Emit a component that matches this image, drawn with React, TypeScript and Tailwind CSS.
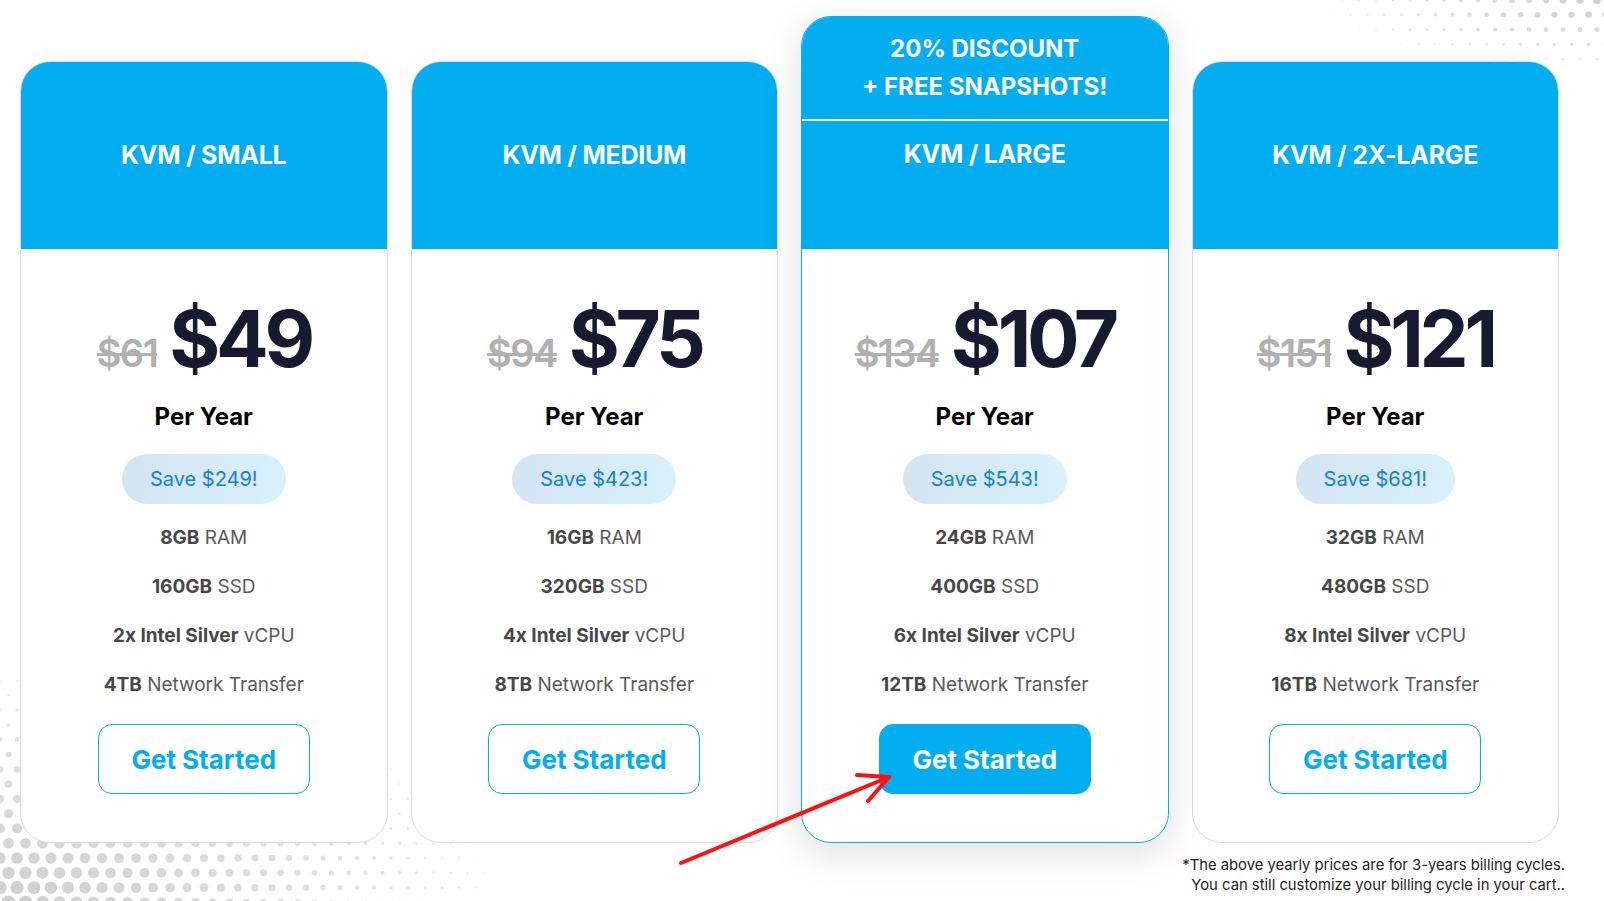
import React from 'react';
import clsx from 'clsx';

type Plan = {
  name: string;
  old: string;
  price: string;
  save: string;
  ram: string;
  ssd: string;
  cpu: string;
  transfer: string;
  featured?: boolean;
};

const plans: Plan[] = [
  { name: 'KVM / SMALL', old: '$61', price: '$49', save: 'Save $249!', ram: '8GB', ssd: '160GB', cpu: '2x', transfer: '4TB' },
  { name: 'KVM / MEDIUM', old: '$94', price: '$75', save: 'Save $423!', ram: '16GB', ssd: '320GB', cpu: '4x', transfer: '8TB' },
  { name: 'KVM / LARGE', old: '$134', price: '$107', save: 'Save $543!', ram: '24GB', ssd: '400GB', cpu: '6x', transfer: '12TB', featured: true },
  { name: 'KVM / 2X-LARGE', old: '$151', price: '$121', save: 'Save $681!', ram: '32GB', ssd: '480GB', cpu: '8x', transfer: '16TB' },
];

// halftone dot field, bigger dots near the given corner
const Halftone: React.FC<{ w: number; h: number; cornerX: number; cornerY: number; maxR: number; className: string }> = ({
  w,
  h,
  cornerX,
  cornerY,
  maxR,
  className,
}) => {
  const dots: React.ReactNode[] = [];
  const step = 17;
  for (let row = 0; row * step * 0.87 <= h + step; row++) {
    const y = row * step * 0.87;
    const offset = row % 2 ? step / 2 : 0;
    for (let x = offset; x <= w + step; x += step) {
      const dx = (x - cornerX) / w;
      const dy = (y - cornerY) / h;
      const d = Math.sqrt(dx * dx + dy * dy);
      const r = maxR * (1 - d);
      if (r < 0.6) continue;
      dots.push(<circle key={`${row}-${x}`} cx={x} cy={y} r={r} fill="#cfcfcf" opacity={0.4 + 0.6 * (1 - d)} />);
    }
  }
  return (
    <svg width={w} height={h} className={className}>
      {dots}
    </svg>
  );
};

const PlanCard: React.FC<{ plan: Plan }> = ({ plan }) => {
  const f = plan.featured;
  return (
    <div
      className={clsx(
        'relative z-10 flex flex-col overflow-hidden rounded-[30px] border bg-white',
        f ? 'border-[#02aeef] shadow-[0_10px_40px_rgba(0,0,0,0.13)]' : 'border-[#dcdcdc]'
      )}
    >
      {f ? (
        <div className="bg-[#02aeef] text-white">
          <div className="flex h-[102px] flex-col items-center justify-center text-[24px] font-bold leading-[38px]">
            <span>20% DISCOUNT</span>
            <span>+ FREE SNAPSHOTS!</span>
          </div>
          <div className="h-[2px] bg-white" />
          <div className="h-[128px] pt-[15px] text-center text-[25px] font-bold leading-[36px] tracking-[-0.01em]">
            {plan.name}
          </div>
        </div>
      ) : (
        <div className="flex h-[187px] items-center justify-center bg-[#02aeef] text-[25px] font-bold tracking-[-0.01em] text-white">
          {plan.name}
        </div>
      )}

      <div className="flex flex-col items-center pt-[51px] pb-[48px]">
        <div className="flex h-[78px] items-baseline justify-center gap-[12px]">
          <span className="text-[38px] leading-none font-semibold tracking-[-0.04em] text-[#b0b0b0] line-through decoration-[3px]">
            {plan.old}
          </span>
          <span className="text-[78px] font-bold leading-none tracking-[-0.055em] text-[#17192f]">{plan.price}</span>
        </div>
        <div className="mt-[23px] text-[24px] font-bold leading-[32px] text-black">Per Year</div>
        <div className="mt-[21px] flex h-[50px] items-center rounded-full bg-linear-to-r from-[#d4e4f2] to-[#d8f1fc] px-7 text-[20px] text-[#1582cd]">
          {plan.save}
        </div>
        <div className="mt-[10px] flex flex-col items-center text-[19px] text-[#5a5a5a]">
          <div className="flex h-[49px] items-center">
            <span className="font-bold text-[#474747]">{plan.ram}</span>&nbsp;RAM
          </div>
          <div className="flex h-[49px] items-center">
            <span className="font-bold text-[#474747]">{plan.ssd}</span>&nbsp;SSD
          </div>
          <div className="flex h-[49px] items-center">
            <span className="font-bold text-[#474747]">{plan.cpu} Intel Silver</span>&nbsp;vCPU
          </div>
          <div className="flex h-[49px] items-center">
            <span className="font-bold text-[#474747]">{plan.transfer}</span>&nbsp;Network Transfer
          </div>
        </div>
        <button
          className={clsx(
            'mt-[14px] h-[70px] w-[212px] rounded-[14px] border border-[#02aeef] text-[26px] font-bold',
            f ? 'bg-[#02aeef] text-white' : 'bg-white text-[#02aeef]'
          )}
        >
          Get Started
        </button>
      </div>
    </div>
  );
};

const App: React.FC = () => {
  return (
    <div className="relative h-[901px] w-[1604px] overflow-hidden bg-white pt-[16px] font-['Inter',sans-serif]">
      <Halftone w={540} h={250} cornerX={0} cornerY={250} maxR={7} className="absolute bottom-0 left-0" />
      <Halftone w={330} h={80} cornerX={330} cornerY={0} maxR={4} className="absolute top-0 right-0" />

      <div className="grid grid-cols-4 items-end gap-[23px] pl-[20px] pr-[45px]">
        {plans.map((p) => (
          <PlanCard key={p.name} plan={p} />
        ))}
      </div>

      <div className="relative z-10 mt-[12px] flex justify-end pr-[39px]">
        <p className="text-right text-[14.8px] leading-[20px] text-[#222]">
          *The above yearly prices are for 3-years billing cycles.
          <br />
          You can still customize your billing cycle in your cart..
        </p>
      </div>

      <svg className="pointer-events-none absolute inset-0 z-20" width={1604} height={901}>
        <g stroke="#ff1010" strokeWidth={4} strokeLinecap="round" fill="none">
          <line x1={681} y1={863} x2={889} y2={777} />
          <line x1={857} y1={775} x2={889} y2={777} />
          <line x1={868} y1={801} x2={889} y2={777} />
        </g>
      </svg>
    </div>
  );
};

export default App;
